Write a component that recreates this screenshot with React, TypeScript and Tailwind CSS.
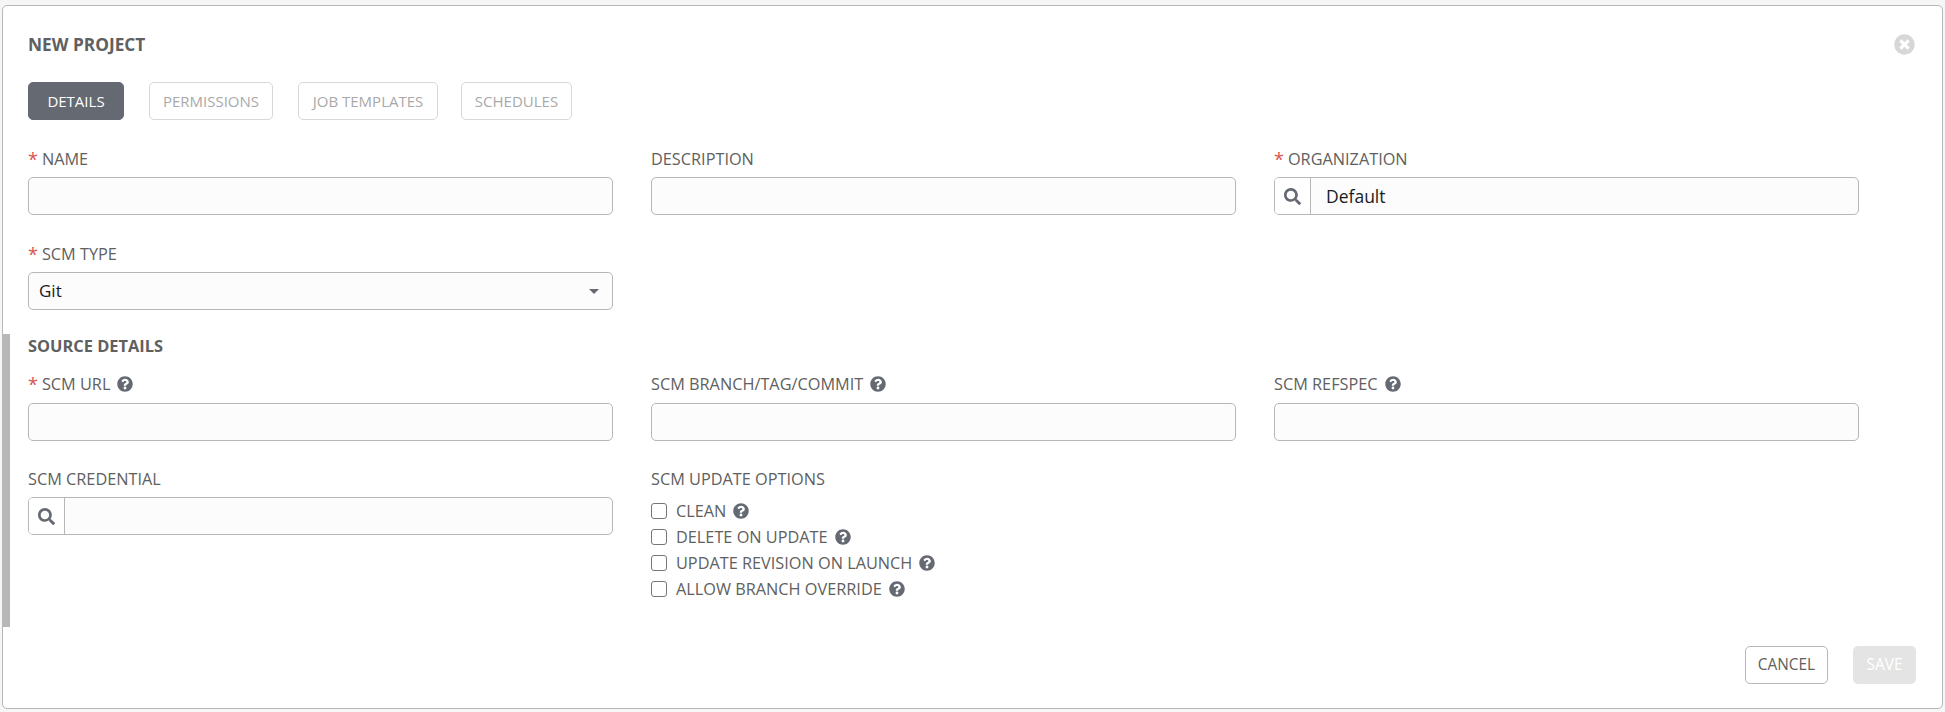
import type { ReactNode } from 'react'
import { FaQuestionCircle, FaSearch, FaTimesCircle } from 'react-icons/fa'

const inputClass =
  'block h-[38px] w-full rounded-[5px] border border-[#b7b7b7] bg-[#fcfcfc] px-[10px] text-[17px] text-[#161b1f] outline-none'

function Help() {
  return <FaQuestionCircle className="ml-[7px] inline-block text-[16px] text-[#646972]" />
}

function Label({ children, required, help }: { children: ReactNode; required?: boolean; help?: boolean }) {
  return (
    <div className="flex h-[20px] items-center text-[16.3px] leading-[20px] text-[#606060]">
      {required && <span className="mr-[4px] text-[18px] text-[#d9534f]">*</span>}
      <span>{children}</span>
      {help && <Help />}
    </div>
  )
}

function Lookup({ value }: { value?: string }) {
  return (
    <div className="flex h-[38px] w-full overflow-hidden rounded-[5px] border border-[#b7b7b7] bg-[#fcfcfc]">
      <div className="flex w-[36px] shrink-0 items-center justify-center border-r border-[#b7b7b7] bg-white text-[17px] text-[#646972]">
        <FaSearch />
      </div>
      <div className="flex-1 pl-[15px] text-[17.5px] leading-[36px] text-[#161b1f]">{value}</div>
    </div>
  )
}

function Tab({ children, active, width }: { children: ReactNode; active?: boolean; width: string }) {
  return (
    <button
      type="button"
      className={`h-[38px] rounded-[5px] border text-[15px] ${width} ${
        active ? 'border-[#646972] bg-[#646972] text-white' : 'border-[#d7d7d7] bg-white text-[#a9a9a9]'
      }`}
    >
      {children}
    </button>
  )
}

function Check({ children }: { children: ReactNode }) {
  return (
    <label className="flex h-[26px] items-center text-[16.3px] text-[#606060]">
      <input
        type="checkbox"
        className="mr-[9px] h-[16px] w-[16px] appearance-none rounded-[3px] border border-[#767676] bg-white"
      />
      <span>{children}</span>
      <Help />
    </label>
  )
}

export default function App() {
  return (
    <div className="h-[712px] w-[1945px] bg-[#f6f6f6] px-[2px] pt-[5px] font-['Open_Sans',sans-serif]">
      <div className="h-[704px] w-[1941px] rounded-[5px] border border-[#b7b7b7] bg-white">
        <div className="flex items-center justify-between pl-[25px] pr-[27px] pt-[28px]">
          <h1 className="text-[17.3px] font-bold leading-[20px] text-[#606060]">NEW PROJECT</h1>
          <FaTimesCircle className="text-[21px] text-[#d7d7d7]" />
        </div>

        <div className="mt-[27px] flex pl-[25px]">
          <Tab active width="w-[96px]">DETAILS</Tab>
          <div className="ml-[25px]"><Tab width="w-[124px]">PERMISSIONS</Tab></div>
          <div className="ml-[25px]"><Tab width="w-[140px]">JOB TEMPLATES</Tab></div>
          <div className="ml-[23px]"><Tab width="w-[111px]">SCHEDULES</Tab></div>
        </div>

        <div className="mt-[29px] grid grid-cols-[585px_585px_585px] gap-x-[38px] pl-[25px]">
          <div>
            <Label required>NAME</Label>
            <div className="mt-[8px]"><input className={inputClass} /></div>
          </div>
          <div>
            <Label>DESCRIPTION</Label>
            <div className="mt-[8px]"><input className={inputClass} /></div>
          </div>
          <div>
            <Label required>ORGANIZATION</Label>
            <div className="mt-[8px]"><Lookup value="Default" /></div>
          </div>
        </div>

        <div className="ml-[25px] mt-[29px] w-[585px]">
          <Label required>SCM TYPE</Label>
          <div className="relative mt-[8px]">
            <select className={`${inputClass} appearance-none`} defaultValue="Git">
              <option>Git</option>
            </select>
            <span className="absolute right-[14px] top-[17px] h-0 w-0 border-x-[5px] border-t-[5px] border-x-transparent border-t-[#646972]" />
          </div>
        </div>

        <div className="mt-[24px] h-[293px] border-l-[7px] border-[#b7b7b7] pl-[18px]">
          <div className="pt-[2px] text-[16.4px] font-bold leading-[20px] text-[#606060]">SOURCE DETAILS</div>
          <div className="mt-[18px] grid grid-cols-[585px_585px_585px] gap-x-[38px]">
            <div>
              <Label required help>SCM URL</Label>
              <div className="mt-[9px]"><input className={inputClass} /></div>
            </div>
            <div>
              <Label help>SCM BRANCH/TAG/COMMIT</Label>
              <div className="mt-[9px]"><input className={inputClass} /></div>
            </div>
            <div>
              <Label help>SCM REFSPEC</Label>
              <div className="mt-[9px]"><input className={inputClass} /></div>
            </div>
          </div>
          <div className="mt-[28px] grid grid-cols-[585px_585px_585px] gap-x-[38px]">
            <div>
              <Label>SCM CREDENTIAL</Label>
              <div className="mt-[8px]"><Lookup /></div>
            </div>
            <div>
              <Label>SCM UPDATE OPTIONS</Label>
              <div className="mt-[9px]">
                <Check>CLEAN</Check>
                <Check>DELETE ON UPDATE</Check>
                <Check>UPDATE REVISION ON LAUNCH</Check>
                <Check>ALLOW BRANCH OVERRIDE</Check>
              </div>
            </div>
          </div>
        </div>

        <div className="mt-[19px] flex justify-end gap-[25px] pr-[26px]">
          <button type="button" className="h-[38px] w-[83px] rounded-[5px] border border-[#b7b7b7] bg-white text-[15.4px] text-[#606060]">
            CANCEL
          </button>
          <button type="button" className="h-[38px] w-[63px] rounded-[5px] bg-[#e4e4e4] text-[15.4px] text-white">
            SAVE
          </button>
        </div>
      </div>
    </div>
  )
}
